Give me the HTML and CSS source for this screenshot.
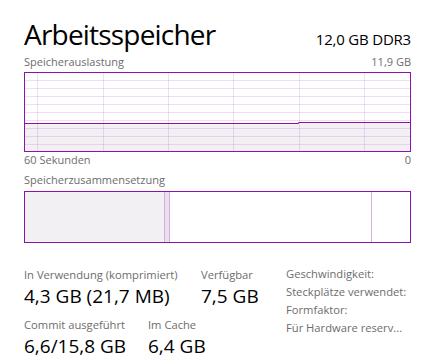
FILE: index.html
```html
<!DOCTYPE html>
<html lang="de">
<head>
<meta charset="utf-8">
<link rel="stylesheet" href="styles.css">
</head>
<body>
<div class="panel">
  <div class="header">
    <h1 class="title">Arbeitsspeicher</h1>
    <div class="spec">12,0 GB DDR3</div>
  </div>
  <div class="caption caption-top"><span>Speicherauslastung</span><span>11,9 GB</span></div>
  <svg class="graph" width="387" height="80" viewBox="0 0 387 80">
    <path class="fill" d="M0.5 51 H274 V50 H386.5 V79.5 H0.5 Z"/>
    <g class="grid">
      <path d="M0 8.5H387M0 16.5H387M0 24.5H387M0 32.5H387M0 40.5H387M0 48.5H387M0 56.5H387M0 64.5H387M0 72.5H387"/>
      <path d="M13.5 0V80M79.5 0V80M144.5 0V80M209.5 0V80M275.5 0V80M340.5 0V80"/>
    </g>
    <path class="line" d="M0.5 51.5 H274.5 V50.5 H386.5"/>
    <rect class="frame" x="0.5" y="0.5" width="386" height="79"/>
  </svg>
  <div class="caption caption-bottom"><span>60 Sekunden</span><span>0</span></div>
  <div class="caption caption-comp"><span>Speicherzusammensetzung</span></div>
  <svg class="comp" width="387" height="52" viewBox="0 0 387 52">
    <rect class="fill" x="0.5" y="0.5" width="140" height="51"/>
    <rect class="modified" x="140" y="0.5" width="6" height="51"/>
    <path class="seg" d="M140.5 0V52M145.5 0V52M347.5 0V52"/>
    <rect class="frame" x="0.5" y="0.5" width="386" height="51"/>
  </svg>
  <div class="stats">
    <div class="stats-main">
      <div class="stat-row">
        <div class="stat stat-used"><div class="label">In Verwendung (komprimiert)</div><div class="value">4,3 GB (21,7 MB)</div></div>
        <div class="stat"><div class="label">Verfügbar</div><div class="value">7,5 GB</div></div>
      </div>
      <div class="stat-row">
        <div class="stat stat-commit"><div class="label">Commit ausgeführt</div><div class="value">6,6/15,8 GB</div></div>
        <div class="stat"><div class="label">Im Cache</div><div class="value">6,4 GB</div></div>
      </div>
    </div>
    <ul class="props">
      <li>Geschwindigkeit:</li>
      <li>Steckplätze verwendet:</li>
      <li>Formfaktor:</li>
      <li>Für Hardware reserv...</li>
    </ul>
  </div>
</div>
</body>
</html>
```
FILE: styles.css
```css
* { box-sizing: border-box; }
html, body { margin: 0; padding: 0; background: #fff; }
body {
  font-family: "Open Sans", "Noto Sans", sans-serif;
  color: #000;
  width: 436px;
  height: 364px;
  overflow: hidden;
}
.panel {
  padding: 16px 0 0 24px;
  width: 411px;
}
.header {
  display: flex;
  justify-content: space-between;
  align-items: baseline;
}
.title {
  margin: 0;
  font-weight: 400;
  font-size: 28px;
  line-height: 36px;
  letter-spacing: -0.8px;
}
.spec {
  font-size: 15px;
  line-height: 20px;
  letter-spacing: -0.2px;
}
.caption {
  display: flex;
  justify-content: space-between;
  font-size: 11px;
  line-height: 14px;
  color: #6d6d6d;
}
.caption-top { margin-top: 3px; height: 17px; }
.caption-bottom { height: 17px; padding-top: 1px; }
.caption-comp { margin-top: 4px; height: 18px; }
.graph, .comp { display: block; }
.graph .fill, .comp .fill { fill: #f3f0f4; }
.grid path { stroke: rgba(139, 18, 174, 0.14); stroke-width: 1; fill: none; }
.graph .line { stroke: #8b12ae; stroke-width: 1; fill: none; }
.frame { fill: none; stroke: #8b12ae; stroke-width: 1; }
.comp .modified { fill: #ece0f0; }
.comp .seg { stroke: #cfb3da; stroke-width: 1; fill: none; }
.stats {
  display: flex;
  margin-top: 24px;
}
.stats-main { width: 262px; }
.stat-row { display: flex; }
.stat-row + .stat-row { margin-top: 7px; }
.stat-used { width: 177px; }
.stat-commit { width: 124px; }
.label {
  font-size: 11.2px;
  line-height: 15px;
  color: #6d6d6d;
}
.value {
  font-size: 19px;
  line-height: 28px;
}
.props {
  list-style: none;
  margin: -2px 0 0;
  padding: 0;
  font-size: 11.2px;
  line-height: 18px;
  color: #6d6d6d;
}
```
